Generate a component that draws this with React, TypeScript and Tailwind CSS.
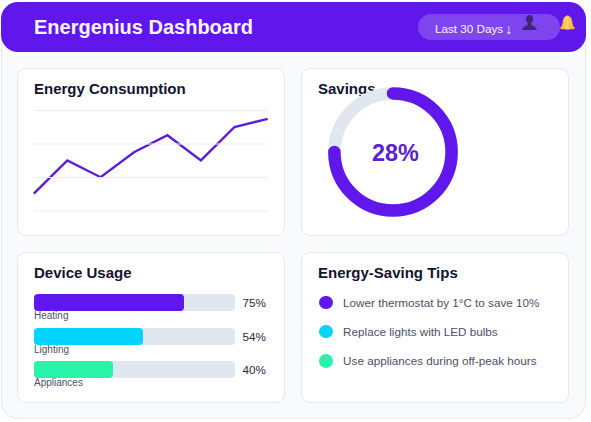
import type { ReactNode } from "react";

const devices = [
  { name: "Heating", value: "75%", width: "w-[150.5px]", color: "bg-[#5f17eb]" },
  { name: "Lighting", value: "54%", width: "w-[109px]", color: "bg-[#00d4ff]" },
  { name: "Appliances", value: "40%", width: "w-[79.5px]", color: "bg-[#27f3a9]" },
];

const tips = [
  { text: "Lower thermostat by 1°C to save 10%", color: "bg-[#5f17eb]" },
  { text: "Replace lights with LED bulbs", color: "bg-[#00d4ff]" },
  { text: "Use appliances during off-peak hours", color: "bg-[#27f3a9]" },
];

function Card({ title, children }: { title: string; children: ReactNode }) {
  return (
    <section className="flex flex-col rounded-[9px] border border-[#e4e9f0] bg-white px-4 pt-[10px]">
      <h2 className="h-5 whitespace-nowrap text-[15px] leading-5 font-bold text-[#11142f]">{title}</h2>
      {children}
    </section>
  );
}

function LineChart() {
  return (
    <svg className="-ml-px mt-[6px] h-[116px] w-[236px] shrink-0" viewBox="33 105 236 116" fill="none">
      <polyline
        points="33.8,193.6 67.3,160.4 100.6,177.2 134,152.2 167.4,135.2 200.9,160.4 234.5,127 267.7,118.8"
        stroke="#5b1bd9"
        strokeWidth="2.4"
      />
      <path d="M34 110.5H268M34 144H268M34 177.5H268M34 211H268" stroke="#e9edf3" strokeWidth="1" />
    </svg>
  );
}

function Gauge() {
  return (
    <div className="relative -mt-3 ml-[10px] flex size-[130px] items-center justify-center">
      <svg className="absolute inset-0 size-full" viewBox="0 0 130 130" fill="none">
        <circle cx="65" cy="65" r="58.6" stroke="#e1e7ef" strokeWidth="12.5" />
        <path
          d="M65 6.4A58.6 58.6 0 1 1 6.4 65"
          stroke="#5f17eb"
          strokeWidth="12.5"
          strokeLinecap="round"
        />
      </svg>
      <span className="relative mt-[2px] ml-[5px] text-[23.4px] leading-7 font-bold text-[#5b21ce]">28%</span>
    </div>
  );
}

function UserIcon() {
  return (
    <svg className="mt-[-9px] ml-[8.5px] h-[15px] w-[15px] shrink-0" viewBox="0 0 15 15">
      <path
        d="M7.5 0C5 0 4 1.8 4 4c-.4.2-.3 1.5.3 1.8C4.6 7 5.2 7.8 5.7 8.3v1.5C4.8 11 1.2 10.8.2 15h14.6c-1-4.2-4.6-4-5.5-5.2V8.3c.5-.5 1.1-1.3 1.4-2.5.6-.3.7-1.6.3-1.8C11 1.8 10 0 7.5 0Z"
        fill="#40257c"
      />
    </svg>
  );
}

function BellIcon() {
  return (
    <svg className="mt-[-8px] h-[16px] w-[15px] shrink-0" viewBox="0 0 15 16">
      <defs>
        <linearGradient id="bell" x1="0" y1="0" x2="1" y2="0">
          <stop offset="0" stopColor="#f4a62d" />
          <stop offset="0.45" stopColor="#ffd566" />
          <stop offset="1" stopColor="#f2a13b" />
        </linearGradient>
      </defs>
      <circle cx="7.5" cy="1.6" r="1.4" fill="#e9963b" />
      <ellipse cx="7.5" cy="14.2" rx="2" ry="1" fill="#bd6a3e" />
      <path
        d="M7.5 1C4.1 1 3.1 4 2.8 6.5 2.5 9.6 1.8 11 .5 12.3c-.6.6-.2 1.9.6 1.9h12.8c.8 0 1.2-1.3.6-1.9-1.3-1.3-2-2.7-2.3-5.8C11.9 4 10.9 1 7.5 1Z"
        fill="url(#bell)"
      />
    </svg>
  );
}

export default function App() {
  return (
    <div className="h-[422px] w-[591px] overflow-hidden bg-white pt-[2px] pl-[1px] font-['Liberation_Sans',Arial,sans-serif]">
      <main className="h-[417px] w-[584.5px] rounded-[17px] bg-[#f8fafc] shadow-[inset_0_0_0_1px_#e5eaf2]">
        <header className="flex h-[50px] items-center rounded-[17px] bg-[#5f17eb] pl-[33px]">
          <h1 className="w-[384px] whitespace-nowrap text-[20px] leading-6 font-bold text-[#faf5ff]">
            Energenius Dashboard
          </h1>
          <div className="flex h-[26px] w-[142px] items-center rounded-full bg-[#7e45ef] pl-[17px]">
            <span className="mt-[3px] flex w-[78px] items-center whitespace-nowrap text-[11.7px] leading-4 text-[#faf5ff]">
              Last 30 Days
              <span className="ml-[2px] text-[14px] leading-4">↓</span>
            </span>
            <UserIcon />
          </div>
          <BellIcon />
        </header>
        <div className="grid grid-cols-[268px_268px] grid-rows-[168px_151px] gap-4 px-4 pt-4">
          <Card title="Energy Consumption">
            <LineChart />
          </Card>
          <Card title="Savings">
            <Gauge />
          </Card>
          <Card title="Device Usage">
            <ul className="mt-[11px]">
              {devices.map((d) => (
                <li key={d.name} className="h-[33.5px]">
                  <div className="-ml-[0.4px] flex items-center gap-2">
                    <div className="h-[17px] w-[201px] shrink-0 rounded-[4px] bg-[#e1e7ef]">
                      <div className={`h-full rounded-[4px] ${d.width} ${d.color}`} />
                    </div>
                    <span className="text-[11.7px] leading-[17px] text-[#252945]">{d.value}</span>
                  </div>
                  <p className="-mt-px text-[10px] leading-[11px] text-[#4a5068]">{d.name}</p>
                </li>
              ))}
            </ul>
          </Card>
          <Card title="Energy-Saving Tips">
            <ul className="mt-[11px] ml-[1px]">
              {tips.map((t) => (
                <li key={t.text} className="mb-[12.2px] flex h-[17px] items-center gap-[10.5px]">
                  <span className={`size-[13.6px] shrink-0 rounded-full ${t.color}`} />
                  <span className="whitespace-nowrap text-[11.7px] leading-[17px] text-[#4a5068]">{t.text}</span>
                </li>
              ))}
            </ul>
          </Card>
        </div>
      </main>
    </div>
  );
}
